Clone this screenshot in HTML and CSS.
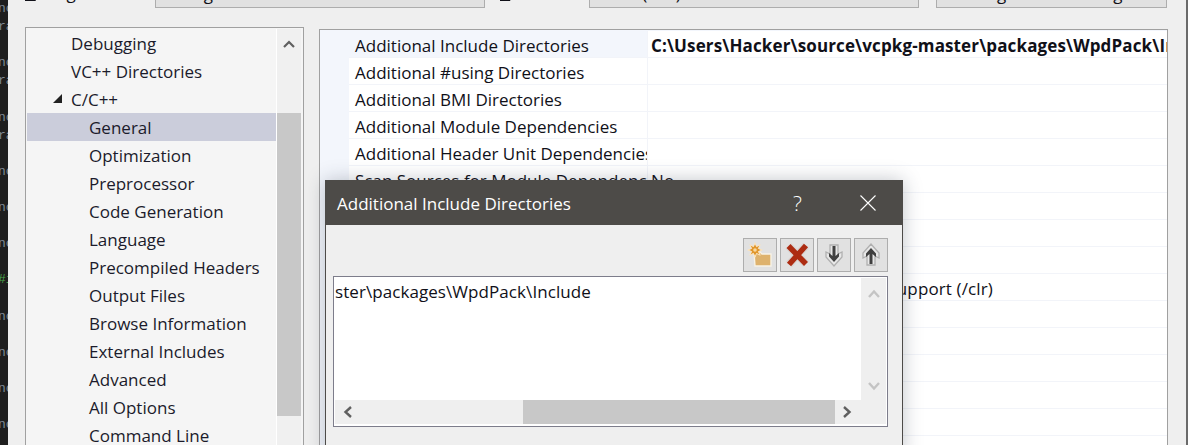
FILE: index.html
```html
<!DOCTYPE html>
<html lang="en">
<head>
<meta charset="utf-8">
<title>Additional Include Directories</title>
<link rel="stylesheet" href="styles.css">
</head>
<body>
<div class="code">
  <span>nc</span><span>ra</span><span></span><span>nc</span><span>ra</span><span></span><span>nc</span><span>ra</span><span></span><span>nc</span><span></span><span>nc</span><span></span><span>nc</span><span></span><span class="green">#i</span><span></span><span>nc</span><span></span><span>nc</span><span></span><span>nc</span><span></span><span>nc</span>
</div>
<div class="window">
  <div class="topbar">
    <div class="label label-config"><u>C</u>onfiguration:</div>
    <div class="combo combo-config">Debug</div>
    <div class="label label-platform"><u>P</u>latform:</div>
    <div class="combo combo-platform">Active(x64)</div>
    <div class="combo button-manager">Configuration Manager...</div>
  </div>
  <div class="panes">
    <div class="tree">
      <ul class="tree-list">
        <li class="tree-item lvl1">Debugging</li>
        <li class="tree-item lvl1">VC++ Directories</li>
        <li class="tree-item lvl1 open">C/C++</li>
        <li class="tree-item lvl2 selected">General</li>
        <li class="tree-item lvl2">Optimization</li>
        <li class="tree-item lvl2">Preprocessor</li>
        <li class="tree-item lvl2">Code Generation</li>
        <li class="tree-item lvl2">Language</li>
        <li class="tree-item lvl2">Precompiled Headers</li>
        <li class="tree-item lvl2">Output Files</li>
        <li class="tree-item lvl2">Browse Information</li>
        <li class="tree-item lvl2">External Includes</li>
        <li class="tree-item lvl2">Advanced</li>
        <li class="tree-item lvl2">All Options</li>
        <li class="tree-item lvl2">Command Line</li>
      </ul>
      <div class="tree-scroll">
        <svg class="tree-up" width="12" height="8" viewBox="0 0 12 8"><path d="M1 7 6 2l5 5" fill="none" stroke="#606060" stroke-width="2.2"/></svg>
        <div class="tree-thumb"></div>
      </div>
    </div>
    <div class="grid">
      <div class="row first"><div class="name">Additional Include Directories</div><div class="value bold">C:\Users\Hacker\source\vcpkg-master\packages\WpdPack\Include;%(AdditionalIncludeDirectories)</div></div>
      <div class="row"><div class="name">Additional #using Directories</div><div class="value"></div></div>
      <div class="row"><div class="name">Additional BMI Directories</div><div class="value"></div></div>
      <div class="row"><div class="name">Additional Module Dependencies</div><div class="value"></div></div>
      <div class="row"><div class="name">Additional Header Unit Dependencies</div><div class="value"></div></div>
      <div class="row"><div class="name">Scan Sources for Module Dependencies</div><div class="value">No</div></div>
      <div class="row"><div class="name">Translate Includes to Imports</div><div class="value">No</div></div>
      <div class="row"><div class="name">Debug Information Format</div><div class="value"></div></div>
      <div class="row"><div class="name">Support Just My Code Debugging</div><div class="value"></div></div>
      <div class="row"><div class="name">Common Language RunTime Support</div><div class="value">Common Language RunTime Support (/clr)</div></div>
      <div class="row"><div class="name">Consume Windows Runtime Extension</div><div class="value"></div></div>
      <div class="row"><div class="name">Suppress Startup Banner</div><div class="value"></div></div>
      <div class="row"><div class="name">Warning Level</div><div class="value"></div></div>
      <div class="row"><div class="name">Treat Warnings As Errors</div><div class="value"></div></div>
      <div class="row"><div class="name">Warning Version</div><div class="value"></div></div>
      <div class="row"><div class="name">Diagnostics Format</div><div class="value">Column Info (/diagnostics:column)</div></div>
    </div>
  </div>
</div>
<div class="edge"></div>

<div class="dialog">
  <div class="dialog-head">
    <div class="dialog-title">Additional Include Directories</div>
    <div class="dialog-help">?</div>
    <svg class="dialog-close" width="16" height="16" viewBox="0 0 16 16"><path d="M.5.5l15 15M15.500.5l-15 15" stroke="#fff" stroke-width="1.1" fill="none"/></svg>
  </div>
  <div class="dialog-body">
    <div class="toolbar">
      <div class="tool">
        <svg width="26" height="26" viewBox="0 0 26 26">
          <path d="M7 10h6l2 2h9v12H8z" fill="#deb26d" stroke="#f7f2e6" stroke-width="1.4"/>
          <path d="M8 .8l1.500 3.800 3.700-1.800-1.800 3.700 3.800 1.500-3.800 1.500 1.800 3.700-3.700-1.800L8 15.200 6.500 11.400l-3.700 1.800 1.800-3.700L.8 8l3.800-1.500L2.800 2.800l3.700 1.800z" fill="#e0952a" stroke="#fbe8c8" stroke-width="1"/>
          <circle cx="8" cy="8" r="1.800" fill="#f8d9a0"/>
        </svg>
      </div>
      <div class="tool">
        <svg width="26" height="26" viewBox="0 0 26 26">
          <path d="M4.500 4 22 22M22 3.500 5 22.500" fill="none" stroke="#d9d5d3" stroke-width="8"/>
          <path d="M4.500 4 22 22M22 3.500 5 22.500" fill="none" stroke="#ad2c12" stroke-width="5.500"/>
        </svg>
      </div>
      <div class="tool">
        <svg width="24" height="26" viewBox="0 0 24 26">
          <path d="M8 3h8v9l4-2v5l-8 9-8-9v-5l4 2z" fill="#e8e8e8" stroke="#b0b0b0" stroke-width="1.300"/>
          <path d="M10.500 4h3v10l3.500-3v3.500L12 20l-5-5.500V11l3.500 3z" fill="#404040"/>
        </svg>
      </div>
      <div class="tool">
        <svg width="24" height="26" viewBox="0 0 24 26">
          <path d="M8 23h8v-9l4 2v-5l-8-9-8 9v5l4-2z" fill="#e8e8e8" stroke="#b0b0b0" stroke-width="1.300"/>
          <path d="M10.500 22h3V12l3.500 3v-3.500L12 6l-5 5.500V15l3.500-3z" fill="#404040"/>
        </svg>
      </div>
    </div>
    <div class="listbox">
      <div class="list-main">
        <div class="list-text">ster\packages\WpdPack\Include</div>
        <div class="vscroll">
          <svg width="12" height="9" viewBox="0 0 12 9"><path d="M1 8 6 2.500 11 8" fill="none" stroke="#c4c4c4" stroke-width="2.400"/></svg>
          <svg width="12" height="9" viewBox="0 0 12 9"><path d="M1 1 6 6.500 11 1" fill="none" stroke="#c4c4c4" stroke-width="2.400"/></svg>
        </div>
      </div>
      <div class="hscroll">
        <svg class="hs-left" width="9" height="12" viewBox="0 0 9 12"><path d="M8 1 2.500 6 8 11" fill="none" stroke="#606060" stroke-width="2.400"/></svg>
        <div class="hs-thumb"></div>
        <svg class="hs-right" width="9" height="12" viewBox="0 0 9 12"><path d="M1 1 6.500 6 1 11" fill="none" stroke="#606060" stroke-width="2.400"/></svg>
      </div>
    </div>
  </div>
</div>
</body>
</html>
```
FILE: styles.css
```css
* { box-sizing: border-box; }
html, body { margin: 0; padding: 0; }
body {
  width: 1188px;
  height: 445px;
  overflow: hidden;
  display: flex;
  position: relative;
  background: #efefef;
  font-family: "Open Sans", "Noto Sans", sans-serif;
  font-size: 17px;
  color: #101018;
}

/* dark editor strip on the left */
.code {
  width: 8px;
  flex: none;
  background: #1e1e1e;
  overflow: hidden;
  display: flex;
  flex-direction: column;
  font-family: "Liberation Mono", monospace;
  font-size: 13px;
  color: #7d8894;
}
.code span { height: 18.1px; line-height: 18px; flex: none; white-space: nowrap; text-indent: -2px; }
.code .green { color: #4aa64a; }

.window { width: 1178px; flex: none; display: flex; flex-direction: column; }
.edge { flex: 1; background: #6a6a6a; }

/* clipped top row: only descenders of its labels show */
.topbar { height: 8px; display: flex; padding-left: 17px; overflow: hidden; flex: none; }
.label, .combo {
  height: 28px;
  margin-top: -20px;
  line-height: 26px;
  white-space: nowrap;
  flex: none;
}
.label-config { width: 130px; }
.label-platform { width: 89px; margin-left: 15px; }
.combo {
  background: #e1e1e1;
  border: 1px solid #adadad;
  text-indent: 5px;
  overflow: hidden;
}
.combo-config, .combo-platform { width: 330px; }
.button-manager { width: 231px; margin-left: 17px; text-align: center; }

/* panes */
.panes { flex: 1; min-height: 0; display: flex; gap: 15px; padding-left: 17px; overflow: hidden; }

.tree {
  width: 279px;
  height: 440px;
  flex: none;
  margin-top: 19px;
  background: #f5f5f5;
  border: 1px solid #a0a0a0;
  padding: 1px 2px 0 1px;
  display: flex;
}
.tree-list { list-style: none; margin: 0; padding: 0; flex: 1; min-width: 0; border-right: 1px solid #fff; }
.tree-item { height: 28px; line-height: 30px; position: relative; white-space: nowrap; color: #1b1b2b; }
.lvl1 { padding-left: 44px; }
.lvl2 { padding-left: 62px; }
.selected { background: #cbcddb; }
.open::before {
  content: "";
  position: absolute;
  left: 26px;
  top: 9px;
  width: 0;
  height: 0;
  border-style: solid;
  border-width: 0 0 9px 9px;
  border-color: transparent transparent #222 transparent;
}
.tree-scroll { width: 24px; flex: none; background: #f0f0f0; display: flex; flex-direction: column; align-items: center; }
.tree-up { margin-top: 11px; }
.tree-thumb { width: 24px; height: 303px; margin-top: 65px; background: #c8c8c8; }

.grid {
  width: 849px;
  height: 440px;
  flex: none;
  margin-top: 21px;
  border: 1px solid #a0a0a0;
  background: #f3f6fc;
  padding-top: 1px;
  overflow: hidden;
}
.row { display: flex; height: 27px; margin-left: 29px; background: #fff; border-bottom: 1px solid #f2f4f9; }
.name {
  width: 299px;
  flex: none;
  padding-left: 6px;
  line-height: 29px;
  white-space: nowrap;
  overflow: hidden;
  border-right: 1px solid #f2f4f9;
}
.value {
  flex: 1;
  min-width: 0;
  padding-left: 3px;
  line-height: 29px;
  white-space: nowrap;
  overflow: hidden;
  letter-spacing: .13px;
}
.bold { font-weight: 700; }
.first .name { background: #f3f6fc; }

/* dialog */
.dialog {
  position: absolute;
  left: 325px;
  top: 180px;
  width: 578px;
  height: 280px;
  background: #efefef;
  border: 1px solid #4d4b48;
  box-shadow: 0 0 18px rgba(40, 50, 70, .28);
}
.dialog-head { height: 44px; background: #4d4b48; display: flex; align-items: center; color: #fff; padding-left: 11px; }
.dialog-title { width: 456px; flex: none; }
.dialog-help { width: 67px; flex: none; font-size: 21px; font-weight: 300; }
.dialog-body { padding: 13px 14px 0 7px; }
.toolbar { display: flex; justify-content: flex-end; gap: 3px; height: 38px; }
.tool {
  width: 34px;
  height: 34px;
  background: #e1e1e1;
  border: 1px solid #adadad;
  display: flex;
  align-items: center;
  justify-content: center;
}
.listbox {
  height: 151px;
  background: #fff;
  border: 1px solid #7d7d8b;
  padding: 1px;
  display: flex;
  flex-direction: column;
}
.list-main { flex: 1; min-height: 0; display: flex; }
.list-text { flex: 1; line-height: 28px; white-space: nowrap; letter-spacing: .07px; }
.vscroll {
  width: 25px;
  flex: none;
  background: #efefef;
  display: flex;
  flex-direction: column;
  align-items: center;
  justify-content: space-between;
  padding: 11px 0 9px;
}
.hscroll { height: 24px; flex: none; background: #efefef; display: flex; align-items: center; margin-bottom: 1px; }
.hs-left { margin-left: 8px; flex: none; }
.hs-thumb { width: 312px; height: 24px; margin-left: 171px; background: #c8c8c8; flex: none; }
.hs-right { margin-left: 8px; flex: none; }
```
